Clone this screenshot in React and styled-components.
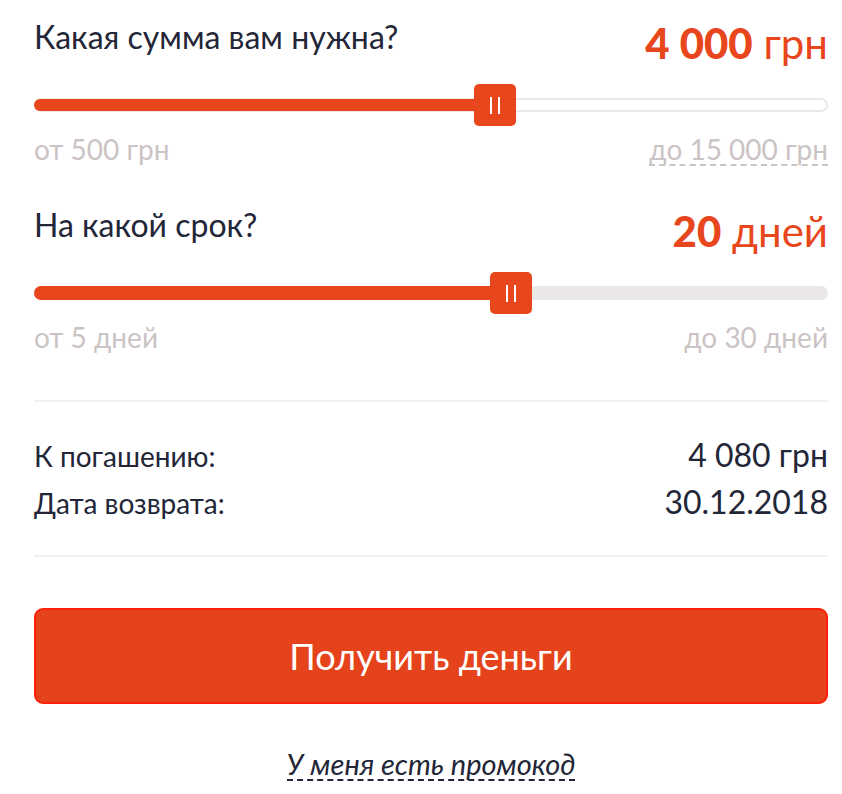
import React from "react";
import styled, { createGlobalStyle } from "styled-components";

const GlobalStyle = createGlobalStyle`
  body {
    margin: 0;
    background: #ffffff;
    font-family: Lato, "Noto Sans", sans-serif;
    color: #222637;
  }
`;

const ORANGE = "#e8461c";
const INK = "#222637";
const MUTED = "#cbc4c4";

const Page = styled.div`
  width: 794px;
  padding: 18px 14px 0 34px;
`;

const Section = styled.section`
  display: flex;
  flex-direction: column;
  margin-bottom: ${(p) => p.$gap || 0}px;
`;

const Head = styled.div`
  display: flex;
  justify-content: space-between;
  align-items: flex-start;
`;

const Question = styled.h2`
  margin: 0;
  font-size: 32px;
  line-height: 38px;
  font-weight: 400;
  color: ${INK};
`;

const Amount = styled.div`
  font-size: 42px;
  line-height: 50px;
  color: ${ORANGE};
  b {
    font-weight: 900;
  }
`;

const Track = styled.div`
  position: relative;
  height: 14px;
  margin-top: 30px;
  border-radius: 7px;
  box-sizing: border-box;
  background: ${(p) => (p.$outlined ? "#ffffff" : "#ebe7e7")};
  border: ${(p) => (p.$outlined ? "2px solid #ebe7e7" : "none")};
`;

const Fill = styled.div`
  position: absolute;
  left: ${(p) => (p.$outlined ? -2 : 0)}px;
  top: ${(p) => (p.$outlined ? -1 : 0)}px;
  bottom: ${(p) => (p.$outlined ? -1 : 0)}px;
  border-radius: 7px;
  background: ${ORANGE};
`;

const Thumb = styled.div`
  position: absolute;
  top: 50%;
  width: 42px;
  height: 42px;
  margin-left: -21px;
  transform: translateY(-50%);
  border-radius: 5px;
  background: ${ORANGE};
  display: flex;
  align-items: center;
  justify-content: center;
  gap: 6px;
  span {
    width: 2px;
    height: 17px;
    background: #ffffff;
  }
`;

const Limits = styled.div`
  display: flex;
  justify-content: space-between;
  align-items: flex-start;
  margin-top: 22px;
  font-size: 28px;
  color: ${MUTED};
  line-height: 30px;
`;

const Dashed = styled.span`
  border-bottom: 2px dashed ${MUTED};
`;

const Divider = styled.hr`
  margin: 0;
  border: none;
  height: 2px;
  background: #f2efef;
`;

const Summary = styled.div`
  display: grid;
  grid-template-columns: 1fr auto;
  align-items: baseline;
  padding: 30px 0 29px;
`;

const Key = styled.div`
  font-size: 28px;
  line-height: 45px;
  color: ${INK};
`;

const Val = styled.div`
  font-size: 32px;
  line-height: 45px;
  text-align: right;
  color: ${INK};
`;

const Button = styled.button`
  display: block;
  width: 100%;
  height: 96px;
  margin-top: 51px;
  border: 2px solid #fb1f0c;
  border-radius: 9px;
  background: #e5431b;
  color: #ffffff;
  font-family: Lato, "Noto Sans", sans-serif;
  font-size: 36px;
  cursor: pointer;
`;

const Promo = styled.div`
  display: flex;
  justify-content: center;
  margin-top: 45px;
  a {
    font-size: 29px;
    font-style: italic;
    color: ${INK};
    text-decoration: none;
    border-bottom: 2px dashed ${INK};
    line-height: 30px;
  }
`;

function Slider({ value, outlined }) {
  return (
    <Track $outlined={outlined}>
      <Fill $outlined={outlined} style={{ width: `${value}%` }} />
      <Thumb style={{ left: `${value}%` }}>
        <span />
        <span />
      </Thumb>
    </Track>
  );
}

export default function App() {
  return (
    <>
      <GlobalStyle />
      <Page>
        <Section $gap={40}>
          <Head>
            <Question>Какая сумма вам нужна?</Question>
            <Amount>
              <b>4 000</b> грн
            </Amount>
          </Head>
          <Slider value={58.1} outlined />
          <Limits>
            <span>от 500 грн</span>
            <Dashed>до 15 000 грн</Dashed>
          </Limits>
        </Section>
        <Section $gap={48}>
          <Head>
            <Question>На какой срок?</Question>
            <Amount>
              <b>20</b> дней
            </Amount>
          </Head>
          <Slider value={60.1} />
          <Limits>
            <span>от 5 дней</span>
            <span>до 30 дней</span>
          </Limits>
        </Section>
        <Divider />
        <Summary>
          <Key>К погашению:</Key>
          <Val>4 080 грн</Val>
          <Key>Дата возврата:</Key>
          <Val>30.12.2018</Val>
        </Summary>
        <Divider />
        <Button>Получить деньги</Button>
        <Promo>
          <a href="#">У меня есть промокод</a>
        </Promo>
      </Page>
    </>
  );
}
